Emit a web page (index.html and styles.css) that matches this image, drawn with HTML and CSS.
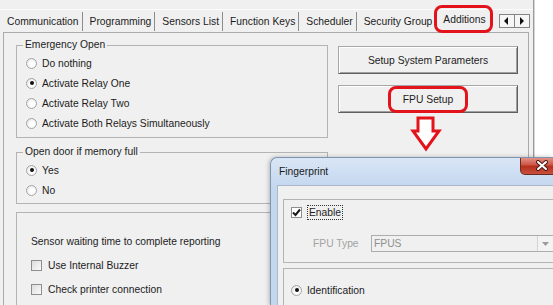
FILE: index.html
```html
<!DOCTYPE html>
<html lang="en">
  <head>
    <meta charset="UTF-8" />
    <title>Additions</title>
    <link rel="stylesheet" href="styles.css">
  </head>
  <body>
    <div class="window">
      <div class="caption"></div>
      <div class="tabs">
        <span class="tab first">Communication</span>
        <span class="tab">Programming</span>
        <span class="tab">Sensors List</span>
        <span class="tab">Function Keys</span>
        <span class="tab">Scheduler</span>
        <span class="tab last">Security Group</span>
        <span class="tab active">Additions</span>
        <div class="scroll">
          <span class="sbtn"><svg width="5" height="8" viewBox="0 0 5 8"><polygon points="4,0 0,4 4,8" fill="#111"/></svg></span>
          <span class="sbtn"><svg width="5" height="8" viewBox="0 0 5 8"><polygon points="1,0 5,4 1,8" fill="#111"/></svg></span>
        </div>
      </div>
      <div class="panel">
        <div class="top">
          <div class="left">
            <fieldset class="group emergency">
              <legend>Emergency Open</legend>
              <label class="opt"><span class="radio"></span>Do nothing</label>
              <label class="opt"><span class="radio on"></span>Activate Relay One</label>
              <label class="opt"><span class="radio"></span>Activate Relay Two</label>
              <label class="opt"><span class="radio"></span>Activate Both Relays Simultaneously</label>
            </fieldset>
            <fieldset class="group door">
              <legend>Open door if memory full</legend>
              <label class="opt"><span class="radio on"></span>Yes</label>
              <label class="opt"><span class="radio"></span>No</label>
            </fieldset>
          </div>
          <div class="right">
            <div class="btn">Setup System Parameters</div>
            <div class="btn second"><span class="mark">FPU Setup</span></div>
          </div>
        </div>
        <fieldset class="group report">
          <div class="line">Sensor waiting time to complete reporting</div>
          <label class="opt"><span class="check"></span>Use Internal Buzzer</label>
          <label class="opt"><span class="check"></span>Check printer connection</label>
        </fieldset>
      </div>
    </div>

    <!-- red arrow pointing to the dialog -->
    <svg class="pointer" width="32" height="40" viewBox="0 0 32 40">
      <polygon points="8,3 23,3 23,16 29,16 16,34 3,16 8,16" fill="#fff" stroke="#e3131b" stroke-width="3" stroke-linejoin="miter"/>
    </svg>

    <div class="dialog">
      <div class="dlg-title">
        <span class="dlg-name">Fingerprint</span>
        <span class="close">
          <svg width="14" height="11" viewBox="0 0 14 11">
            <path d="M3 2 L11 9 M11 2 L3 9" stroke="#4a1b14" stroke-width="4" stroke-linecap="round"/>
            <path d="M3 2 L11 9 M11 2 L3 9" stroke="#fff" stroke-width="2" stroke-linecap="round"/>
          </svg>
        </span>
      </div>
      <div class="dlg-body">
        <fieldset class="group fp1">
          <div class="fp-row">
            <span class="check on">
              <svg width="9" height="9" viewBox="0 0 9 9"><path d="M1 4.5 L3.5 7 L8 1.5" stroke="#1a1a1a" stroke-width="2" fill="none"/></svg>
            </span>
            <span class="focus">Enable</span>
          </div>
          <div class="fp-type">
            <span class="lbl">FPU Type</span>
            <div class="combo">
              <span class="val">FPUS</span>
              <span class="drop"><svg width="7" height="4" viewBox="0 0 7 4"><polygon points="0,0 7,0 3.5,4" fill="#9a9a9a"/></svg></span>
            </div>
          </div>
        </fieldset>
        <fieldset class="group fp2">
          <div class="fp-row"><span class="radio on"></span>Identification</div>
        </fieldset>
      </div>
    </div>
  </body>
</html>
```

FILE: styles.css
```css
* {
  margin: 0;
  padding: 0;
  box-sizing: border-box;
}
body {
  width: 553px;
  height: 305px;
  overflow: hidden;
  position: relative;
  background: #fff;
  font-family: "Liberation Sans", Arial, sans-serif;
  font-size: 10.3px;
  color: #1c1c1c;
}
.window {
  width: 534px;
  height: 305px;
  overflow: hidden;
  background: #f0f0f0;
  border-right: 1px solid #9a9a9a;
  box-shadow: 1px 0 0 #d6d6d6;
}
.caption {
  height: 10px;
  border-bottom: 1px solid #fbfbfb;
}

/* tab strip */
.tabs {
  display: flex;
  height: 22px;
  padding-left: 3px;
}
.tab {
  align-self: flex-end;
  margin-bottom: 1px;
  line-height: 19px;
  padding: 0 3px 0 7px;
  border-right: 1px solid #8c8c8c;
  white-space: nowrap;
}
.tab.first {
  padding-left: 4px;
}
.tab.last {
  border-right: 0;
  padding-right: 2px;
}
.tab.active {
  position: relative;
  z-index: 1;
  align-self: flex-start;
  margin: -5px 0 0;
  height: 28px;
  line-height: 22px;
  padding: 1px 4px 0 6px;
  border: 3px solid #e3131b;
  border-radius: 8px;
}
.scroll {
  display: flex;
  align-self: flex-start;
  margin: 4px 0 0 6px;
}
.sbtn {
  width: 16px;
  height: 14px;
  border: 1px solid #858585;
  background: #f6f6f6;
  display: flex;
  align-items: center;
  justify-content: center;
}
.sbtn + .sbtn {
  margin-left: -1px;
}

/* tab page */
.panel {
  margin-left: 3px;
  width: 526px;
  height: 273px;
  overflow: hidden;
  border: 1px solid #aaa;
  border-bottom: 0;
  padding: 6px 0 0 12px;
}
.top {
  display: flex;
}
.left {
  width: 312px;
}
.group {
  border: 1px solid #b4b4b4;
}
.group legend {
  margin-left: 6px;
  padding: 0 2px;
  line-height: 12px;
}
.opt {
  display: flex;
  align-items: center;
  height: 20px;
  padding-left: 9px;
  white-space: nowrap;
}
.emergency {
  padding: 2px 0 4px;
}
.door {
  margin-top: 8px;
  padding: 2px 0 3px;
}
.radio {
  flex: none;
  width: 11px;
  height: 11px;
  margin-right: 5px;
  border-radius: 50%;
  border: 1px solid #a4a4a4;
  background: radial-gradient(circle at 60% 60%, #fff 30%, #dedede);
  display: flex;
  align-items: center;
  justify-content: center;
}
.radio.on::after {
  content: "";
  width: 4px;
  height: 4px;
  border-radius: 50%;
  background: #111;
}
.check {
  flex: none;
  width: 11px;
  height: 11px;
  margin-right: 6px;
  border: 1px solid #8e8e8e;
  background: linear-gradient(135deg, #dcdcdc, #fbfbfb);
  display: flex;
  align-items: center;
  justify-content: center;
}

.right {
  margin-left: 10px;
  padding-top: 7px;
}
.btn {
  width: 180px;
  height: 28px;
  display: flex;
  align-items: center;
  justify-content: center;
  border: 1px solid #a8a8a8;
  border-right-color: #5f5f5f;
  border-bottom-color: #5f5f5f;
  background: #f0f0f0;
  box-shadow: inset 1px 1px 0 #fff, inset -1px -1px 0 #a0a0a0;
  white-space: nowrap;
}
.btn.second {
  margin-top: 11px;
}
.mark {
  line-height: 17px;
  padding: 2px 12px;
  border: 3px solid #e3131b;
  border-radius: 8px;
}

.report {
  margin-top: 8px;
  width: 502px;
  padding: 16px 0 8px 14px;
}
.report .line,
.report .opt {
  height: 24px;
  display: flex;
  align-items: center;
  padding-left: 0;
}

.pointer {
  position: absolute;
  left: 410px;
  top: 115px;
}

/* Fingerprint dialog */
.dialog {
  position: absolute;
  left: 270px;
  top: 157px;
  width: 283px;
  height: 148px;
  overflow: hidden;
  padding-left: 6px;
  border: 1px solid #7f94ae;
  border-right: 0;
  border-bottom: 0;
  border-radius: 7px 0 0 0;
  background: linear-gradient(#d9e6f6, #c3d7ef 30px);
  box-shadow: -1px 0 4px rgba(0, 0, 0, 0.25);
}
.dlg-title {
  display: flex;
  height: 27px;
}
.dlg-name {
  line-height: 27px;
  padding-left: 2px;
  color: #1a1a1a;
}
.close {
  margin: -1px -10px 0 auto;
  width: 43px;
  height: 18px;
  border: 1px solid #6a2a22;
  border-top: 0;
  border-radius: 0 0 5px 5px;
  background: linear-gradient(#e59a90, #cf5647 45%, #b52f1e 55%, #c8503c);
  display: flex;
  align-items: center;
  justify-content: center;
}
.dlg-body {
  height: 120px;
  overflow: hidden;
  border: 1px solid #a9b7c9;
  border-right: 0;
  border-bottom: 0;
  background: #f0f0f0;
  padding: 13px 0 0 5px;
}
.fp1 {
  width: 290px;
  padding: 4px 0 10px 7px;
}
.fp-row {
  display: flex;
  align-items: center;
  height: 16px;
}
.fp-row .radio {
  margin-right: 5px;
}
.check.on {
  width: 11px;
  margin-right: 5px;
  background: #fff;
}
.focus {
  border: 1px dotted #333;
  padding: 0 1px;
  line-height: 13px;
}
.fp-type {
  display: flex;
  align-items: center;
  margin-top: 15px;
  height: 17px;
}
.lbl {
  width: 58px;
  margin-left: 22px;
  color: #a3a3a3;
}
.combo {
  width: 183px;
  height: 17px;
  display: flex;
  align-items: center;
  border: 1px solid #adadad;
  background: #f0f0f0;
}
.val {
  flex: 1;
  padding-left: 2px;
  color: #8f8f8f;
}
.drop {
  width: 16px;
  height: 15px;
  display: flex;
  align-items: center;
  justify-content: center;
  border-left: 1px solid #d4d4d4;
  background: #f3f3f3;
}
.fp2 {
  width: 290px;
  margin-top: 5px;
  padding: 13px 0 20px 7px;
}
```
